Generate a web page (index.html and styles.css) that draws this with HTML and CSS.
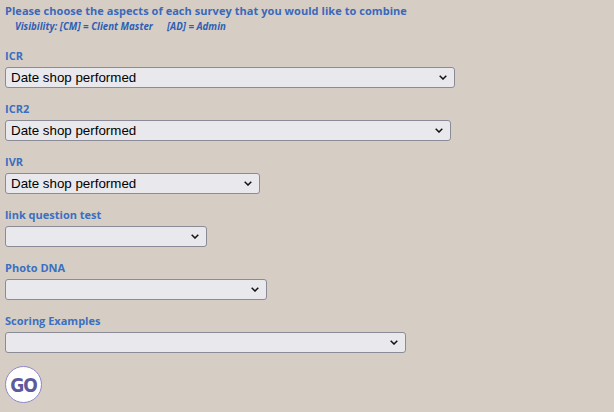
FILE: index.html
```html
<!DOCTYPE html>
<html>
<head>
<meta charset="utf-8">
<link rel="stylesheet" href="styles.css">
</head>
<body>
<div class="page">
  <div class="intro">Please choose the aspects of each survey that you would like to combine</div>
  <div class="legend">Visibility: [CM] = Client Master<span class="gap"></span>[AD] = Admin</div>
  <div class="fields">
    <div class="field">
      <label class="lbl">ICR</label>
      <select class="sel w-icr"><option>Date shop performed</option></select>
    </div>
    <div class="field">
      <label class="lbl">ICR2</label>
      <select class="sel w-icr2"><option>Date shop performed</option></select>
    </div>
    <div class="field">
      <label class="lbl">IVR</label>
      <select class="sel w-ivr"><option>Date shop performed</option></select>
    </div>
    <div class="field">
      <label class="lbl">link question test</label>
      <select class="sel w-link"><option></option></select>
    </div>
    <div class="field">
      <label class="lbl">Photo DNA</label>
      <select class="sel w-photo"><option></option></select>
    </div>
    <div class="field">
      <label class="lbl">Scoring Examples</label>
      <select class="sel w-score"><option></option></select>
    </div>
  </div>
  <button class="go" type="button">GO</button>
</div>
</body>
</html>
```

FILE: styles.css
```css
html, body {
  margin: 0;
  padding: 0;
  background: #d6cec4;
}
.page {
  padding: 3px 5px 0 5px;
  font-family: "Open Sans", "DejaVu Sans", sans-serif;
}
.intro {
  font-size: 11px;
  font-weight: 700;
  line-height: 15px;
  color: #3a68bb;
  letter-spacing: 0.05px;
}
.legend {
  font-size: 9.7px;
  font-weight: 700;
  font-style: italic;
  line-height: 14px;
  color: #2f5fb5;
  padding-left: 10px;
  margin-top: 2px;
}
.legend .gap {
  display: inline-block;
  width: 14px;
}
.fields {
  display: flex;
  flex-direction: column;
  margin-top: 15px;
}
.field {
  display: flex;
  flex-direction: column;
  align-items: flex-start;
  margin-bottom: 14px;
}
.lbl {
  display: block;
  font-size: 11px;
  font-weight: 700;
  line-height: 13px;
  color: #3a6fc2;
  margin-bottom: 5px;
}
.sel {
  -webkit-appearance: none;
  appearance: none;
  height: 21px;
  box-sizing: border-box;
  border: 1px solid #8b8b98;
  border-radius: 3px;
  background-color: #e9e8ec;
  background-image: url("data:image/svg+xml,%3Csvg xmlns='http://www.w3.org/2000/svg' width='8' height='5' viewBox='0 0 8 5'%3E%3Cpath d='M0.7 0.7 L4 4 L7.3 0.7' fill='none' stroke='%23111' stroke-width='1.5'/%3E%3C/svg%3E");
  background-repeat: no-repeat;
  background-position: right 7px center;
  font-family: "Liberation Sans", Arial, sans-serif;
  font-size: 13.33px;
  color: #000;
  padding: 0 20px 0 5px;
  margin: 0;
}
.w-icr { width: 450px; }
.w-icr2 { width: 446px; }
.w-ivr { width: 255px; }
.w-link { width: 202px; }
.w-photo { width: 262px; }
.w-score { width: 401px; }
.go {
  display: flex;
  align-items: center;
  justify-content: center;
  width: 37px;
  height: 37px;
  border-radius: 50%;
  border: 1px solid #8f86c8;
  background: #fff;
  color: #5c5a9c;
  font-family: "DejaVu Sans Condensed", "DejaVu Sans", sans-serif;
  font-stretch: condensed;
  font-weight: 700;
  font-size: 19px;
  letter-spacing: -1px;
  padding: 0;
  margin-top: -1px;
}
```
